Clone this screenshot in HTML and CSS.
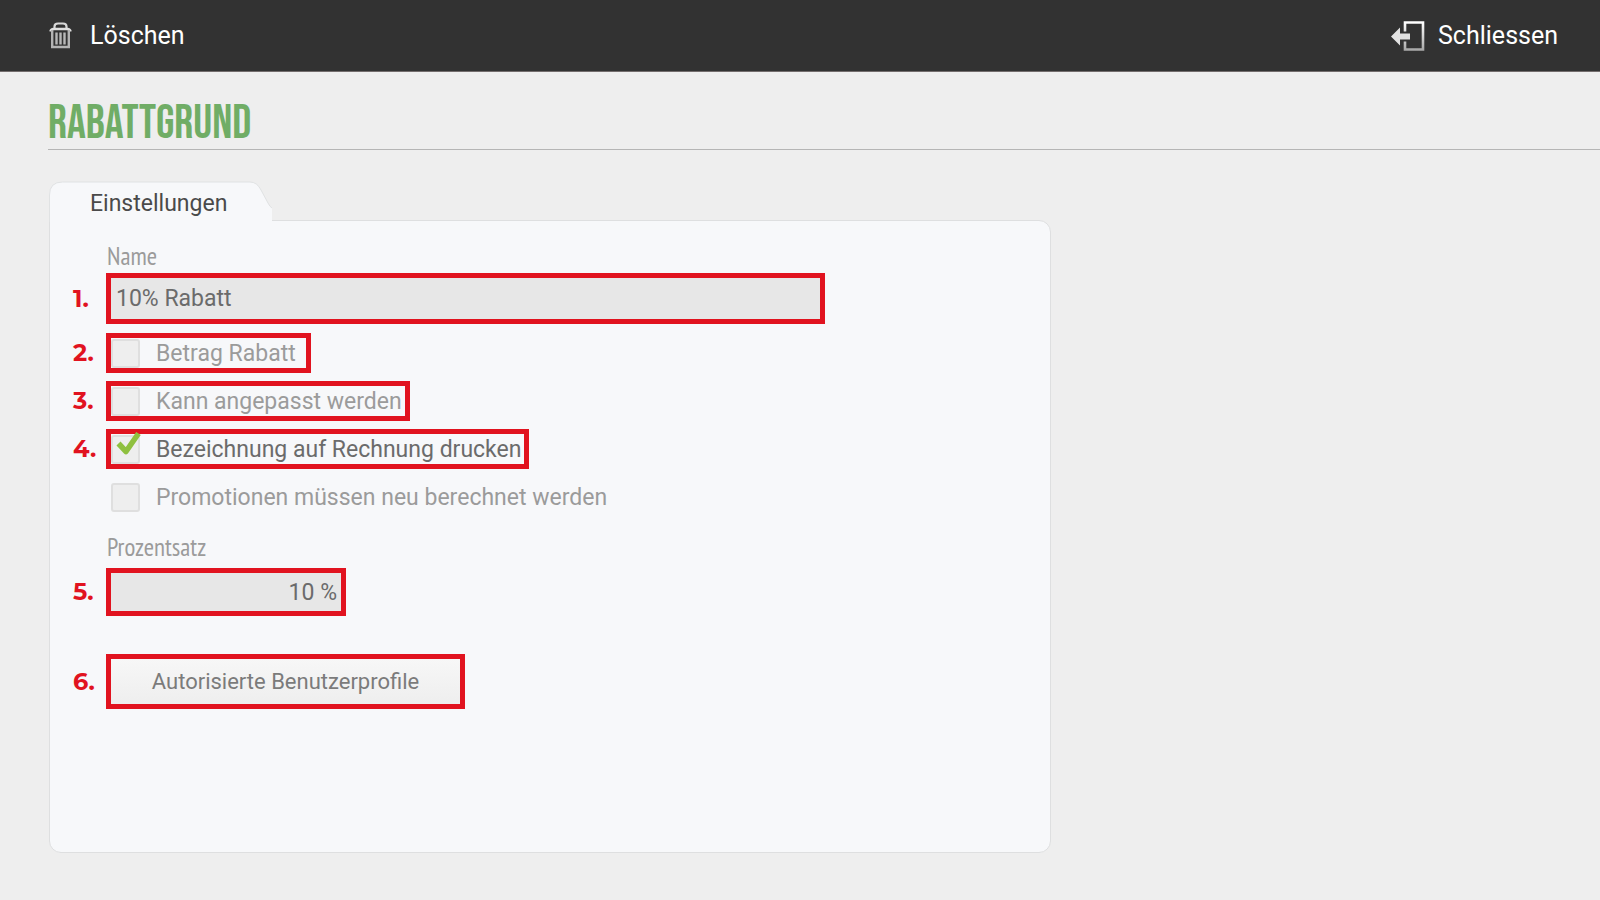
FILE: index.html
```html
<!DOCTYPE html>
<html lang="de">
<head>
<meta charset="utf-8">
<title>Rabattgrund</title>
<link rel="stylesheet" href="styles.css">
</head>
<body>
<header class="toolbar">
  <button class="tool" type="button">
    <svg class="icon-trash" width="24" height="28" viewBox="0 0 24 28" fill="none" aria-hidden="true">
      <path d="M5.500 7V4.500Q5.500 1.500 9 1.500H14Q17.500 1.500 17.500 4.500V7" stroke="#d8d8d8" stroke-width="2.200"/>
      <path d="M1.500 9.500Q2 7 4.500 7H18.500Q21 7 21.500 9.500" stroke="#dedede" stroke-width="2.600"/>
      <path d="M3.200 8V25H19.800V8" stroke="#b4b4b4" stroke-width="2.400"/>
      <path d="M7.500 10.500V22.500M11.500 10.500V22.500M15.500 10.500V22.500" stroke="#b8b8b8" stroke-width="2.400"/>
    </svg>
    <span>Löschen</span>
  </button>
  <button class="tool tool-close" type="button">
    <svg width="34" height="32" viewBox="0 0 34 32" fill="none" aria-hidden="true">
      <defs><linearGradient id="metal" x1="0" y1="0" x2="0" y2="1"><stop offset="0" stop-color="#fff"/><stop offset="1" stop-color="#aaa"/></linearGradient></defs>
      <path d="M14 11.500V2.500H32V29.500H14V21.500" stroke="url(#metal)" stroke-width="2.600"/>
      <path d="M0 16.500L9 7.500V13.500H19V19.500H9V25.500Z" fill="#e2e2e2"/>
    </svg>
    <span>Schliessen</span>
  </button>
</header>
<main class="page">
  <h1 class="title">Rabattgrund</h1>
  <div class="tabs">
    <button class="tab" type="button">
      <svg class="tab-shape" width="224" height="41" viewBox="0 0 224 41" aria-hidden="true">
        <path d="M0.500 41V14Q0.500 1 13.500 1H201Q208 1 212 9L219 22Q221 26 223 27V41Z" fill="#f7f8fa"/>
        <path d="M0.500 41V14Q0.500 1 13.500 1H201Q208 1 212 9L219 22Q221 26 223 27" fill="none" stroke="#e0e2e3"/>
      </svg>
      <span class="tab-text">Einstellungen</span>
    </button>
  </div>
  <form class="panel">
    <label class="caption" for="name">Name</label>
    <div class="row">
      <span class="num">1.</span>
      <input class="field field-name" id="name" type="text" value="10% Rabatt">
    </div>
    <div class="checks">
      <div class="row"><span class="num">2.</span><label class="check marked check-wide"><input class="box" type="checkbox"><span>Betrag Rabatt</span></label></div>
      <div class="row"><span class="num">3.</span><label class="check marked"><input class="box" type="checkbox"><span>Kann angepasst werden</span></label></div>
      <div class="row"><span class="num">4.</span><label class="check marked active"><span class="tick-wrap"><input class="box" type="checkbox" checked><svg class="tick" width="26" height="24" viewBox="0 0 26 24" fill="none" aria-hidden="true"><path d="M2.500 11.500L10 19.500L22.500 1.500" stroke="#8fc03f" stroke-width="5.500" stroke-linejoin="round"/></svg></span><span>Bezeichnung auf Rechnung drucken</span></label></div>
      <div class="row"><span class="num"></span><label class="check"><input class="box" type="checkbox"><span>Promotionen müssen neu berechnet werden</span></label></div>
    </div>
    <label class="caption" for="percent">Prozentsatz</label>
    <div class="row row-percent">
      <span class="num">5.</span>
      <input class="field field-percent" id="percent" type="text" value="10 %">
    </div>
    <div class="row row-profiles">
      <span class="num">6.</span>
      <button class="profiles" type="button">Autorisierte Benutzerprofile</button>
    </div>
  </form>
</main>
</body>
</html>
```

FILE: styles.css
```css
* { box-sizing: border-box; }
body {
  margin: 0;
  min-height: 100vh;
  background: #eeeeee;
  font-family: Roboto, "Liberation Sans", sans-serif;
  color: #6b6b6b;
}
button, input { font: inherit; color: inherit; margin: 0; }
button { cursor: pointer; }
.toolbar {
  display: flex;
  justify-content: space-between;
  align-items: center;
  height: 72px;
  padding: 1px 42px 0 49px;
  background: #323232;
  border-bottom: 1px solid #736d6d;
}
.tool {
  display: flex;
  align-items: center;
  gap: 17px;
  padding: 0;
  border: 0;
  background: none;
  color: #fff;
  font-size: 25px;
  line-height: 32px;
}
.tool-close { gap: 13px; }
.title {
  margin: 0 0 0 48px;
  height: 78px;
  padding-top: 28px;
  border-bottom: 1px solid #b5b5b5;
  font-family: "Bebas Neue", Oswald, "Roboto Condensed", "Liberation Sans Narrow", sans-serif;
  font-size: 47px;
  font-weight: 400;
  line-height: 48px;
  text-transform: uppercase;
  color: #70ad66;
}
.tabs { margin: 31px 0 0 49px; }
.tab {
  position: relative;
  display: block;
  height: 39px;
  padding: 0 50px 0 41px;
  border: 0;
  background: none;
  font-size: 23px;
  line-height: 46px;
  color: #4a4a4a;
}
.tab-shape { position: absolute; left: 0; top: 0; z-index: 1; }
.tab-text { position: relative; z-index: 2; }
.panel {
  max-width: 1002px;
  min-height: 633px;
  margin: 0 48px 47px 49px;
  padding: 20px 24px 24px 22px;
  background: #f7f8fa;
  border: 1px solid #dedfe0;
  border-radius: 0 12px 12px 12px;
}
.caption {
  display: block;
  padding: 0 0 2px 35px;
  font-family: "PT Sans Narrow", "Fira Sans Condensed", "Roboto Condensed", "Liberation Sans Narrow", sans-serif;
  font-size: 25px;
  font-weight: 400;
  line-height: 30px;
  color: #9b9b9b;
}
.row { display: flex; align-items: center; }
.num {
  flex: 0 0 33px;
  margin-left: 1px;
  font-family: "Proxima Nova", Montserrat, Lato, sans-serif;
  font-size: 24px;
  font-weight: 700;
  line-height: 30px;
  color: #e1131f;
}
.field {
  min-width: 0;
  padding: 0 5px;
  border: 5px solid #e1131f;
  border-radius: 0;
  background: #e7e7e7;
  font-size: 23px;
  outline: 0;
}
.field-name { flex: 0 1 719px; height: 51px; }
.checks { display: grid; gap: 8px; margin: 9px 0 15px; }
.check {
  display: flex;
  align-items: center;
  gap: 16px;
  height: 40px;
  padding-left: 5px;
  font-size: 23px;
  color: #9b9b9b;
}
.marked { padding: 0 3px 0 0; border: 5px solid #e1131f; }
.check-wide { padding-right: 10px; }
.active { color: #6b6b6b; }
.box {
  display: block;
  appearance: none;
  width: 29px;
  height: 29px;
  border: 2px solid #dfdfdf;
  border-radius: 3px;
  background: #eeeeee;
}
.tick-wrap { position: relative; }
.tick { position: absolute; left: 5px; top: -3px; pointer-events: none; }
.row-percent { margin-top: 4px; }
.field-percent { width: 240px; height: 48px; padding: 0 4px; text-align: right; }
.row-profiles { margin-top: 38px; }
.profiles {
  width: 359px;
  height: 55px;
  padding: 0;
  border: 5px solid #e1131f;
  background: linear-gradient(#f7f7f7, #eeeeee);
  font-size: 22px;
  color: #7b7b7b;
}
```
